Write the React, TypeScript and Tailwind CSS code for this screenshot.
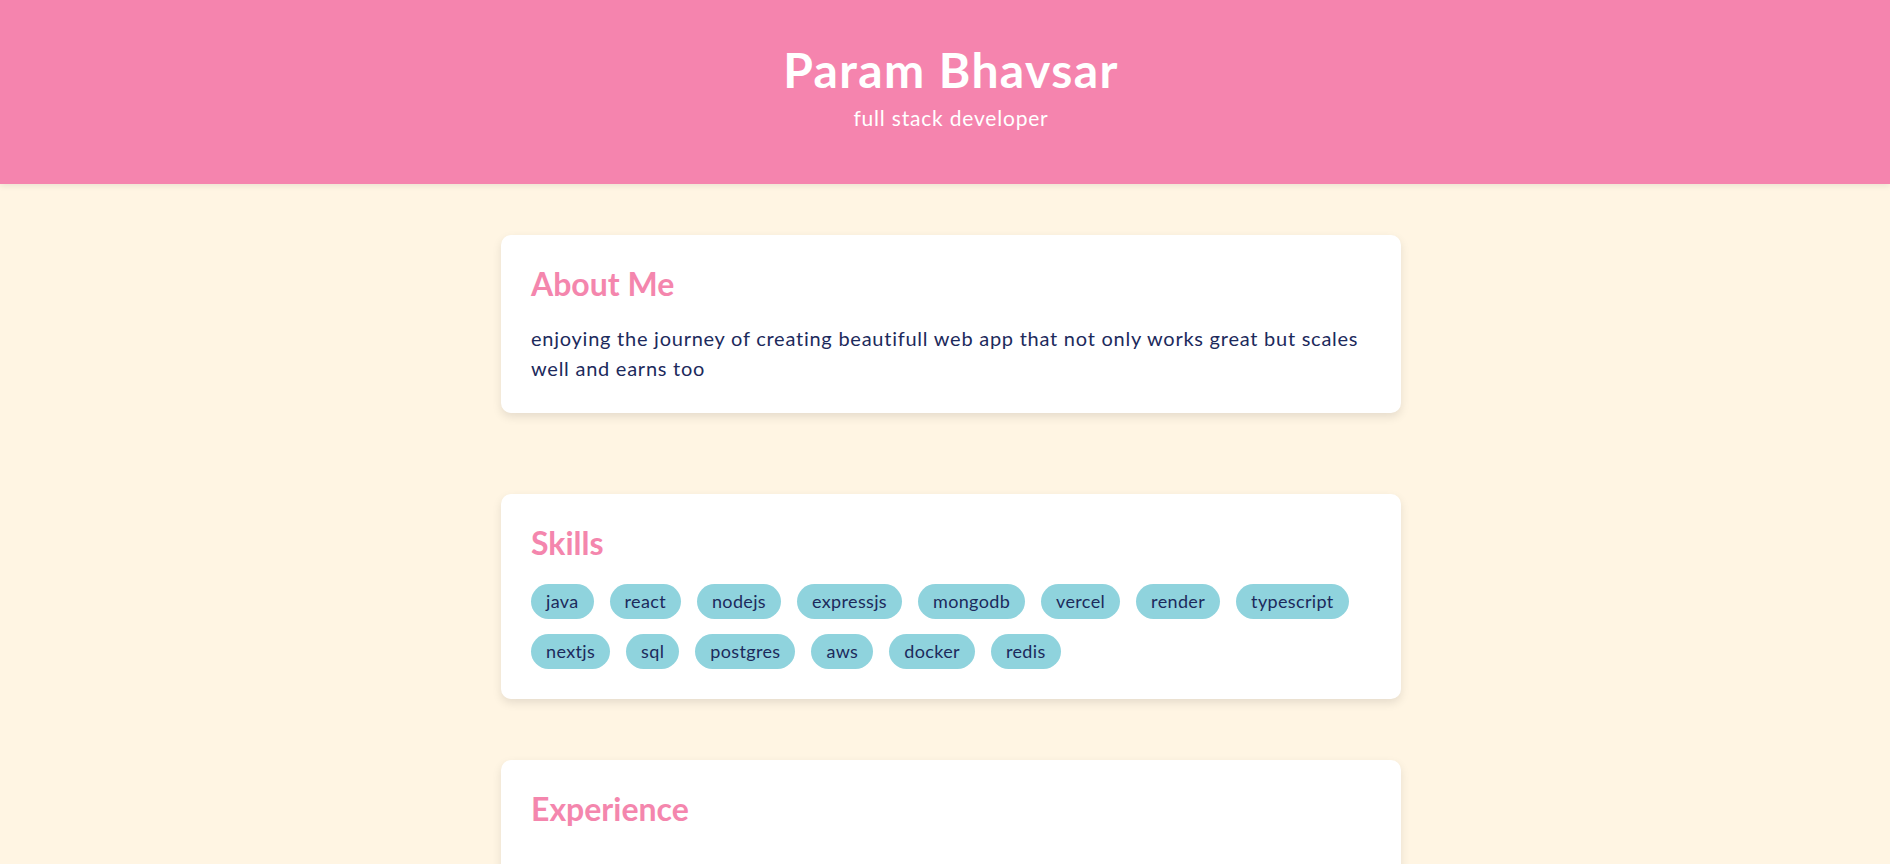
import React from "react";

const skills = [
  "java",
  "react",
  "nodejs",
  "expressjs",
  "mongodb",
  "vercel",
  "render",
  "typescript",
  "nextjs",
  "sql",
  "postgres",
  "aws",
  "docker",
  "redis",
];

function Card({ title, children, className = "" }: { title: string; children?: React.ReactNode; className?: string }) {
  return (
    <section
      className={`w-[900px] mx-auto bg-white rounded-[10px] p-[30px] shadow-[0_4px_10px_rgba(0,0,0,0.1)] ${className}`}
    >
      <h2 className="text-[32px] leading-[1.2] font-bold text-[#f486ad]">{title}</h2>
      {children}
    </section>
  );
}

export default function App() {
  return (
    <div
      className="min-h-screen bg-[#fff5e3] text-[#1c2a5c]"
      style={{ fontFamily: "Lato, 'Noto Sans', sans-serif" }}
    >
      <header className="bg-[#f584ae] shadow-[0_2px_6px_rgba(0,0,0,0.08)] pt-[41px] pb-[51px] pl-[12px] text-center text-white">
        <h1 className="text-[48px] leading-[1.2] font-bold tracking-[1.4px]">Param Bhavsar</h1>
        <p className="mt-1 text-[21px] leading-[30px] tracking-[0.8px]">full stack developer</p>
      </header>
      <main className="pl-[12px] pt-[51px] pb-10">
        <Card title="About Me">
          <p className="mt-5 text-[20px] leading-[30px] tracking-[0.75px]">
            enjoying the journey of creating beautifull web app that not only works great but scales well and earns too
          </p>
        </Card>
        <Card title="Skills" className="mt-[81px]">
          <div className="mt-[22px] flex flex-wrap gap-x-[16px] gap-y-[15px]">
            {skills.map((s) => (
              <span
                key={s}
                className="h-[35px] px-[15px] flex items-center rounded-full bg-[#8fd3dd] text-[18px] tracking-[0.35px]"
              >
                {s}
              </span>
            ))}
          </div>
        </Card>
        <Card title="Experience" className="mt-[61px] min-h-[200px]" />
      </main>
    </div>
  );
}
